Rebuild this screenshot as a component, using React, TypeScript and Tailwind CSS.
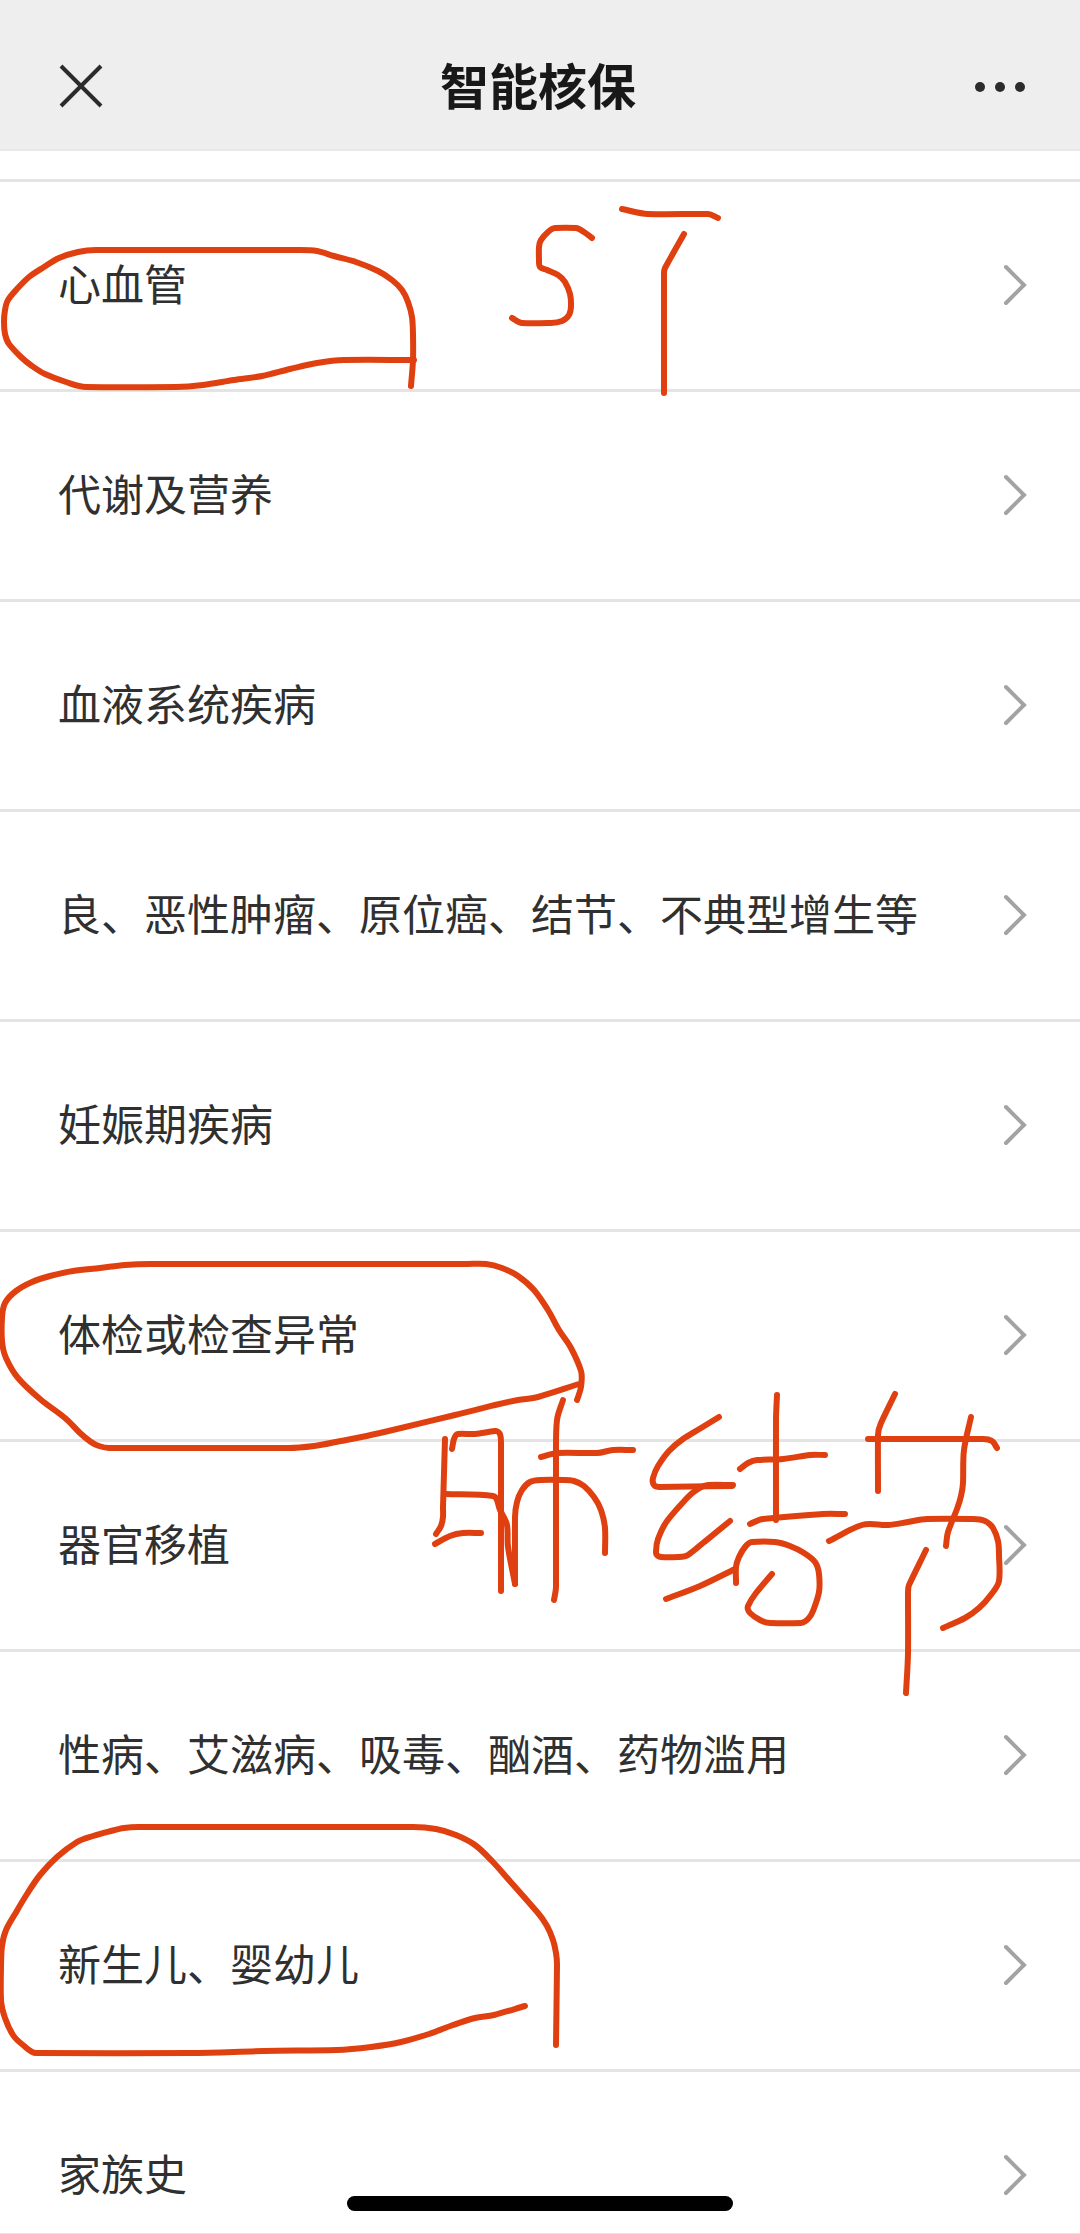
import React from 'react';

type Point = [number, number];

interface Category {
    id: string;
    name: string;
}

const categories: Category[] = [
    { id: 'cardio', name: '心血管' },
    { id: 'metabolism', name: '代谢及营养' },
    { id: 'blood', name: '血液系统疾病' },
    { id: 'tumor', name: '良、恶性肿瘤、原位癌、结节、不典型增生等' },
    { id: 'pregnancy', name: '妊娠期疾病' },
    { id: 'checkup', name: '体检或检查异常' },
    { id: 'transplant', name: '器官移植' },
    { id: 'substance', name: '性病、艾滋病、吸毒、酗酒、药物滥用' },
    { id: 'newborn', name: '新生儿、婴幼儿' },
    { id: 'family', name: '家族史' },
];

// --- Pen strokes ---

const circleStrokes: Point[][] = [
    // 心血管
    [[411, 386], [413, 360], [413, 335], [412, 317], [408, 302], [402, 290], [392, 280], [378, 271], [356, 262], [334, 256], [317, 251], [300, 250], [96, 250], [78, 252], [59, 258], [44, 267], [29, 277], [17, 289], [8, 300], [5, 310], [4, 322], [5, 334], [9, 344], [21, 357], [32, 366], [45, 374], [66, 382], [86, 387], [176, 387], [203, 385], [234, 380], [262, 376], [290, 369], [317, 363], [344, 360], [414, 360]],
    // 体检或检查异常
    [[577, 1400], [581, 1387], [581, 1371], [571, 1348], [559, 1330], [548, 1310], [534, 1290], [518, 1276], [502, 1268], [486, 1264], [467, 1264], [150, 1264], [125, 1265], [100, 1268], [73, 1271], [50, 1276], [32, 1282], [16, 1291], [5, 1303], [2, 1318], [2, 1341], [6, 1358], [18, 1378], [40, 1399], [65, 1418], [80, 1433], [91, 1442], [99, 1446], [109, 1448], [289, 1448], [314, 1446], [336, 1442], [380, 1433], [455, 1415], [495, 1405], [518, 1400], [538, 1397], [579, 1384]],
    // 新生儿、婴幼儿
    [[556, 2045], [557, 1965], [556, 1953], [553, 1940], [547, 1926], [538, 1913], [509, 1880], [492, 1861], [475, 1845], [456, 1835], [436, 1829], [413, 1827], [138, 1827], [124, 1828], [111, 1831], [93, 1836], [77, 1842], [57, 1857], [40, 1875], [27, 1894], [15, 1914], [6, 1930], [2, 1946], [1, 1967], [1, 2000], [5, 2018], [13, 2035], [23, 2045], [36, 2053], [191, 2053], [264, 2051], [337, 2050], [371, 2047], [401, 2042], [429, 2034], [453, 2025], [475, 2018], [494, 2015], [525, 2006]],
];

const noteStrokes: Point[][] = [
    // S
    [[592, 238], [584, 232], [576, 228], [555, 228], [548, 232], [541, 240], [539, 247], [539, 260], [540, 267], [547, 270], [558, 275], [565, 282], [570, 294], [571, 306], [569, 315], [562, 321], [551, 323], [522, 323], [512, 318]],
    // T
    [[622, 209], [648, 214], [708, 214], [718, 218]],
    [[684, 234], [665, 268], [664, 276], [664, 393]],
    // 肺
    [[445, 1439], [443, 1507], [443, 1517], [441, 1526], [436, 1534]],
    [[452, 1449], [454, 1439], [458, 1434], [475, 1434], [495, 1431], [500, 1434], [501, 1443], [501, 1591]],
    [[445, 1494], [493, 1496], [500, 1510], [507, 1525], [508, 1547], [515, 1584]],
    [[515, 1584], [515, 1517], [517, 1502], [522, 1490], [530, 1482], [541, 1480], [563, 1480], [574, 1481], [584, 1486], [594, 1497], [601, 1510], [605, 1528], [605, 1553]],
    [[435, 1544], [450, 1536], [463, 1533], [481, 1533]],
    [[541, 1457], [558, 1453], [597, 1453], [613, 1450], [633, 1450]],
    [[563, 1400], [557, 1420], [556, 1450], [556, 1587], [554, 1600]],
    // 结
    [[719, 1417], [701, 1428], [683, 1439], [669, 1451], [658, 1466], [653, 1478], [654, 1485], [660, 1487], [732, 1486]],
    [[733, 1485], [708, 1485], [698, 1489], [688, 1497], [667, 1521], [658, 1539], [656, 1553], [661, 1557], [678, 1557], [688, 1555], [703, 1543], [730, 1521]],
    [[666, 1599], [700, 1586], [735, 1569]],
    [[777, 1395], [776, 1420], [776, 1520]],
    [[740, 1469], [748, 1463], [757, 1460], [783, 1459], [810, 1455], [825, 1455]],
    [[750, 1524], [763, 1519], [823, 1514], [845, 1514]],
    [[736, 1583], [736, 1567], [739, 1557], [745, 1547], [752, 1542], [775, 1542], [790, 1546], [804, 1553], [815, 1562], [819, 1574], [819, 1592], [813, 1611], [808, 1619], [801, 1623], [770, 1623], [760, 1620], [750, 1613], [748, 1606], [756, 1593], [772, 1574]],
    // 节
    [[868, 1439], [983, 1439], [992, 1441], [997, 1448]],
    [[895, 1394], [881, 1423], [878, 1435], [878, 1491]],
    [[971, 1417], [964, 1450], [963, 1483], [961, 1496], [957, 1509], [948, 1532], [946, 1546]],
    [[829, 1541], [862, 1525], [888, 1525], [908, 1522], [927, 1519], [973, 1519], [985, 1521], [993, 1528], [998, 1541], [999, 1555], [999, 1581], [990, 1596], [979, 1608], [965, 1618], [943, 1628]],
    [[926, 1550], [909, 1585], [908, 1593], [908, 1653], [906, 1693]],
];

// Joins the sampled points with cubic curves. The longer neighbour decides the
// tangent at a point, so the straight parts stay straight.
const toPath = (points: Point[]) => {
    const tangents = points.map(([x, y], i) => {
        const a = points[Math.max(i - 1, 0)];
        const b = points[Math.min(i + 1, points.length - 1)];
        const before = Math.hypot(x - a[0], y - a[1]);
        const after = Math.hypot(b[0] - x, b[1] - y);
        const tx = (x - a[0]) * before + (b[0] - x) * after;
        const ty = (y - a[1]) * before + (b[1] - y) * after;
        const length = Math.hypot(tx, ty) || 1;
        return [tx / length, ty / length];
    });

    let d = `M${points[0][0]} ${points[0][1]}`;
    for (let i = 1; i < points.length; i++) {
        const [x0, y0] = points[i - 1];
        const [x1, y1] = points[i];
        const h = Math.hypot(x1 - x0, y1 - y0) / 3;
        const [ax, ay] = tangents[i - 1];
        const [bx, by] = tangents[i];
        d += `C${x0 + ax * h} ${y0 + ay * h} ${x1 - bx * h} ${y1 - by * h} ${x1} ${y1}`;
    }
    return d;
};

const PenLayer: React.FC = () => (
    <svg
        className="absolute inset-x-0 top-0 w-full pointer-events-none"
        viewBox="0 0 1080 2234"
        fill="none"
        stroke="#e04010"
        strokeWidth="6"
        strokeLinecap="round"
        strokeLinejoin="round"
        aria-hidden="true"
    >
        {[...circleStrokes, ...noteStrokes].map((points, i) => (
            <path key={i} d={toPath(points)} />
        ))}
    </svg>
);

// --- Header ---

const Header: React.FC = () => (
    <header className="flex-shrink-0 flex items-center justify-between h-[151px] pt-[22px] px-[53px] bg-[#eeeeee] border-b-2 border-[#e8e8e8]">
        <button aria-label="关闭" className="w-[54px] h-[54px] flex items-center justify-center">
            <svg className="w-[54px] h-[54px]" viewBox="0 0 54 54" fill="none" stroke="#2b2b2b" strokeWidth="4">
                <path d="M8 7l40 40M48 7L8 47" />
            </svg>
        </button>
        <h1 className="pb-1 pr-1 text-[49px] leading-[64px] font-bold text-[#181818]">智能核保</h1>
        <button aria-label="更多" className="w-[54px] h-[54px] flex items-center justify-center">
            <svg className="w-[54px] h-[54px]" viewBox="0 0 54 54" fill="#2b2b2b">
                <circle cx="7" cy="28" r="5" />
                <circle cx="27" cy="28" r="5" />
                <circle cx="47" cy="28" r="5" />
            </svg>
        </button>
    </header>
);

// --- Category list ---

const CategoryRow: React.FC<{ category: Category }> = ({ category }) => (
    <li className="border-b-3 border-[#e4e4e4]">
        <button className="w-full h-[207px] pb-0.5 pl-[58px] pr-[52px] flex items-center justify-between text-left">
            <span className="pb-1.5 text-[43px] leading-[60px] text-[#303030]">{category.name}</span>
            <svg className="w-7 h-11 flex-shrink-0" viewBox="0 0 28 44" fill="none" stroke="#a3a3a3" strokeWidth="4" strokeLinecap="round">
                <path d="M6 4l18 18L6 40" />
            </svg>
        </button>
    </li>
);

export default function App() {
    return (
        <div
            lang="zh-CN"
            className="relative h-screen flex flex-col overflow-hidden bg-white font-['Noto_Sans_CJK_SC',sans-serif]"
        >
            <Header />
            <main className="flex-1 min-h-0 overflow-hidden border-b border-[#e4e4e4]">
                <ul className="mt-7 border-t-3 border-[#e4e4e4]">
                    {categories.map(category => (
                        <CategoryRow key={category.id} category={category} />
                    ))}
                </ul>
            </main>
            <PenLayer />
            <div className="absolute bottom-[23px] left-1/2 -translate-x-1/2 w-[386px] h-[15px] rounded-full bg-black" />
        </div>
    );
}
